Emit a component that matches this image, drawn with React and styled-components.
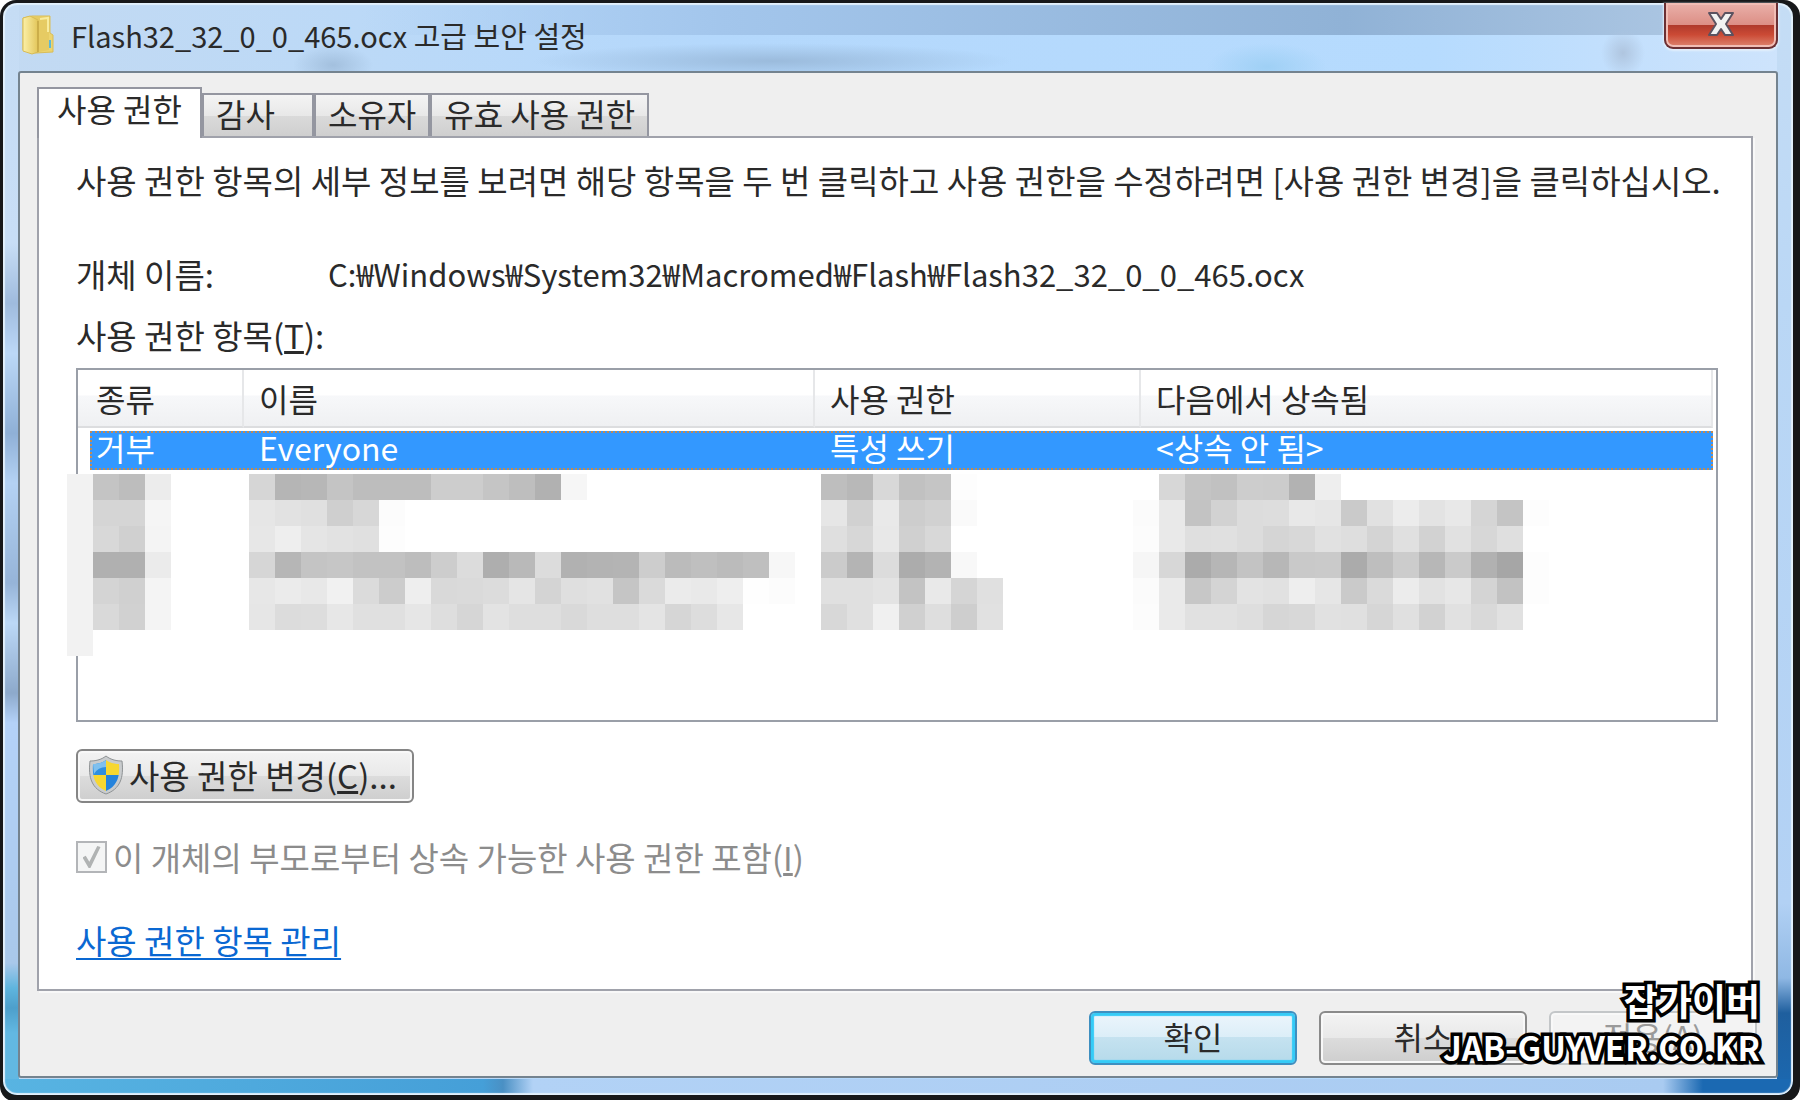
import { useState } from "react";
import styled, { createGlobalStyle, css } from "styled-components";

const GlobalStyle = createGlobalStyle`
  * {
    box-sizing: border-box;
  }
  body {
    margin: 0;
    background: #fff;
    color: #2a2a2a;
    font-family: "Noto Sans CJK KR", "Noto Sans", sans-serif;
    font-size: 32px;
    font-weight: 400;
    line-height: 38px;
  }
  button, input {
    font: inherit;
    color: inherit;
  }
`;

const Frame = styled.div`
  position: relative;
  display: flex;
  min-height: 100vh;
  padding: 3px 7px 7px 3px;
  border-radius: 16px;
  background: #17181a;
`;

const Glass = styled.main`
  flex: 1;
  min-width: 0;
  display: flex;
  flex-direction: column;
  padding: 0 15px 17px;
  border-radius: 14px;
  box-shadow: inset 0 0 1px 2px #e2f0fc;
  background:
    linear-gradient(90deg, #58b4e2, #459fd8 480px, #4a90c4 500px, #b2d2f6 530px, #a9cbf1 calc(100% - 130px), #1b69b2 calc(100% - 90px)) bottom / 100% 16px no-repeat,
    linear-gradient(#c5dcf4, #c8def6 240px, #9fbbdd 300px, #bcd8f7 350px, #8fb0d6 430px, #b4d2f3 480px, #96b4d8 580px, #bcd8f6 620px, #8da9cb 690px, #b4d2f8 720px, #a9c8ea 960px, #5fb5de 985px, #4d9fcb 1005px, #62b8e2 1030px) left / 16px 100% no-repeat,
    linear-gradient(#c5ddf5, #bad7f5 300px, #b2d1f4 900px, #8fb8e4 975px, #1f5f9e 1010px, #1b69b2) right / 16px 100% no-repeat,
    radial-gradient(ellipse 40px 20px at 330px 62px, #a3c0de, transparent),
    radial-gradient(ellipse 240px 18px at 770px 58px, #9bbbdc, transparent),
    radial-gradient(ellipse 22px 24px at 1620px 50px, #afc5df, transparent),
    radial-gradient(ellipse 60px 24px at 1264px 64px, #9fd0f5, transparent),
    linear-gradient(90deg, transparent 20%, #a3c6ec 40%, #90b2d6 75%, #b4cce6) top / 100% 32px no-repeat,
    linear-gradient(90deg, #c3daf2, #b4d8fc 40%, #b6dbfe 80%, #cfe4fc);
`;

const TitleBar = styled.header`
  display: flex;
  align-items: flex-start;
  height: 68px;
`;

const Title = styled.h1`
  flex: 1;
  display: flex;
  align-items: center;
  gap: 17px;
  height: 64px;
  margin: 0;
  padding-left: 4px;
  font-size: 29px;
  font-weight: 400;
  white-space: nowrap;
`;

const CloseButton = styled.button`
  display: grid;
  place-items: center;
  width: 114px;
  height: 46px;
  padding: 0 0 2px;
  border: 2px solid #6b2f33;
  border-top: 0;
  border-radius: 0 0 9px 9px;
  box-shadow: inset 0 0 0 2px #f1bdb5, 0 1px 2px 1px #e3effb;
  background: linear-gradient(#eab1aa, #dc8e85 50%, #b03a2c 51%, #cb4a35 72%, #de8570);
`;

const Client = styled.section`
  flex: 1;
  display: flex;
  flex-direction: column;
  padding: 14px 19px 11px 17px;
  border: 2px solid #74838f;
  border-radius: 3px;
  background: #efefef;
`;

const TabList = styled.div`
  display: flex;
  align-items: flex-end;
`;

const Tab = styled.button`
  height: 43px;
  min-width: 112px;
  padding: 0 12px 5px;
  border: 2px solid #9496a0;
  border-bottom: 0;
  background: linear-gradient(#f4f4f4, #e8e8e8 50%, #dadada 51%, #cfcfcf);
  text-align: left;
  line-height: 36px;
  white-space: nowrap;
  ${(props) =>
    props.$active &&
    css`
      position: relative;
      height: 51px;
      margin-bottom: -2px;
      padding: 0 18px 12px;
      background: #fff;
    `}
`;

const Panel = styled.div`
  flex: 1;
  display: flex;
  flex-direction: column;
  align-items: flex-start;
  margin-right: 4px;
  padding: 23px 33px 30px 37px;
  border: 2px solid #a0a2ab;
  background: #fff;
  box-shadow: 2px 2px 0 #f8f8f8;
  font-size: 33px;
`;

const Hint = styled.p`
  margin: 0 -24px 56px 0;
`;

const ObjectName = styled.dl`
  display: grid;
  grid-template-columns: 252px 1fr;
  margin: 0 0 23px;
  dd {
    margin: 0;
    font-size: 31px;
  }
`;

const ListLabel = styled.div`
  margin-bottom: 14px;
`;

const ListBox = styled.div`
  position: relative;
  align-self: stretch;
  height: 354px;
  margin-bottom: 27px;
  padding-right: 3px;
  border: 2px solid #9a9fa8;
  font-size: 32px;
`;

const Table = styled.table`
  width: 100%;
  table-layout: fixed;
  border-spacing: 0;
  text-align: left;
`;

const HeadCell = styled.th`
  height: 58px;
  padding: 0 0 0 ${(props) => (props.$first ? 18 : 15)}px;
  border-right: 2px solid #e6e7e9;
  border-bottom: 2px solid #dcdddf;
  background: linear-gradient(#fff 45%, #f7f8fa 46%, #eff0f2);
  font-weight: 400;
`;

const SelectedRow = styled.tr`
  position: relative;
  color: #fff;
  /* focus ring runs round the whole row */
  td:first-child::after {
    content: "";
    position: absolute;
    inset: 3px 0 0 12px;
    border: 2px dotted #c08a55;
  }
`;

const Cell = styled.td`
  height: 42px;
  padding: 0 0 4px ${(props) => (props.$first ? 18 : 15)}px;
  line-height: 36px;
  background: linear-gradient(#3398ff, #3398ff) ${(props) => (props.$first ? 12 : 0)}px 3px no-repeat;
`;

const Mosaic = styled.svg`
  position: absolute;
  top: 104px;
  left: -11px;
`;

const ShieldButton = styled.button`
  display: flex;
  align-items: center;
  gap: 5px;
  height: 54px;
  margin-bottom: 35px;
  padding: 0 15px 2px 10px;
  border: 2px solid #858585;
  border-radius: 6px;
  box-shadow: inset 0 0 0 2px #f8f8f8;
  background: linear-gradient(#f3f3f3, #e9e9e9 50%, #dcdcdc 51%, #cecece);
`;

const CheckRow = styled.label`
  display: flex;
  align-items: center;
  gap: 6px;
  margin-bottom: 45px;
  color: #8c8c8c;
`;

const CheckBox = styled.input`
  appearance: none;
  width: 31px;
  height: 32px;
  margin: 0;
  border: 2px solid #b3b5b8;
  background: #f4f5f5;
  display: grid;
  place-items: center;
  &:checked::before {
    content: "";
    width: 18px;
    height: 22px;
    background: #b0b3b3;
    clip-path: polygon(0 52%, 18% 44%, 38% 72%, 82% 0, 100% 4%, 44% 100%, 34% 100%);
  }
`;

const ManageLink = styled.a`
  color: #0a68d2;
  text-underline-offset: 4px;
  text-decoration-thickness: 2px;
`;

const Footer = styled.footer`
  display: flex;
  justify-content: flex-end;
  gap: 22px;
  padding-top: 20px;
`;

const DialogButton = styled.button`
  width: 208px;
  height: 54px;
  padding: 0 0 5px;
  border: 2px solid #8a8a8a;
  border-radius: 6px;
  box-shadow: inset 0 0 0 2px #f8f8f8;
  background: linear-gradient(#f3f3f3, #e9e9e9 50%, #dcdcdc 51%, #cecece);
  ${(props) =>
    props.$primary &&
    css`
      border-color: #3e8fc0;
      box-shadow: inset 0 0 1px 3px #35cbf7;
      background: linear-gradient(#ecf5fc, #dceef8 48%, #c5e2f0 49%, #b5daea);
    `}
  &:disabled {
    border-color: #c3c6c8;
    background: #f3f3f3;
    color: #9a9a9a;
  }
`;

const Watermark = styled.div`
  position: absolute;
  right: 40px;
  bottom: 31px;
  color: #fff;
  font-size: 33px;
  font-weight: 700;
  line-height: 47px;
  text-align: right;
  -webkit-text-stroke: 7px #000;
  paint-order: stroke fill;
  pointer-events: none;
`;

const SiteName = styled.div`
  font-size: 37px;
`;

const tabs = ["사용 권한", "감사", "소유자", "유효 사용 권한"];

const columns = [
  { title: "종류", width: 166, value: "거부" },
  { title: "이름", width: 571, value: "Everyone" },
  { title: "사용 권한", width: 326, value: "특성 쓰기" },
  { title: "다음에서 상속됨", value: "<상속 안 됨>" },
];

// grey levels of the blurred-out rows, one hex pair per tile
const TILE = 26;
const blocks = [
  { col: 0, rows: ["f2", "f2", "f2", "f2", "f2", "f2", "f2"] },
  { col: 1, rows: ["c4 bd ec", "d5 d5 f5", "d8 d0 f4", "b0 b0 eb", "d4 d0 f4", "d9 d1 f4"] },
  {
    col: 7,
    rows: [
      "d6 b5 b7 c4 bd bd bd cd cd c5 be b1 f6",
      "e6 e2 e0 cf d7 fc",
      "e7 ee e5 e2 e0 fd",
      "d6 b6 c4 c6 c2 c2 bd cd dc ae b9 dc b1 b3 b4 cd bb bf bb bf f7",
      "e7 eb e8 f1 db cc ee d9 da dc e5 d4 df e1 c5 da eb e9 ee fe fc",
      "e6 dc dd e7 e0 e0 e6 de d6 e3 de de d9 de de e4 d6 dd e7",
    ],
  },
  {
    col: 29,
    rows: [
      "be b8 d8 c1 c5 fd",
      "e6 d1 e9 cd d1 fa",
      "df d7 e8 d0 d8",
      "cb b4 dc ac b3 f8",
      "e0 e0 e3 c3 e9 d5 e0",
      "d8 e0 f0 d0 de ce e1",
    ],
  },
  {
    col: 41,
    rows: [
      "ff d7 c4 c1 cd cc b2 ee",
      "fb e9 c3 d2 dc dd e8 e6 ca e1 ec e3 e8 d5 c4 fd",
      "fc e9 df e0 dc d5 d8 e1 de d4 e0 d2 e1 d7 df",
      "f6 d7 ab b6 c3 b7 c9 ca ab be cc b7 ca b1 a6 fd",
      "fb ea c7 d4 e3 e1 ee e6 ca da ec e2 e7 d4 c2 fd",
      "fc ea e1 e1 de d6 d8 e1 e0 d6 e0 d2 e1 d9 e1",
    ],
  },
];

function HiddenRows() {
  return (
    <Mosaic width={TILE * 57} height={TILE * 7} shapeRendering="crispEdges" aria-hidden="true">
      {blocks.map((block) =>
        block.rows.map((row, y) =>
          row.split(" ").map((level, x) => (
            <rect
              key={block.col + "-" + y + "-" + x}
              x={(block.col + x) * TILE}
              y={y * TILE}
              width={TILE}
              height={TILE}
              fill={"#" + level + level + level}
            />
          ))
        )
      )}
    </Mosaic>
  );
}

function FolderIcon() {
  return (
    <svg width="32" height="40" viewBox="0 0 32 40" aria-hidden="true">
      <defs>
        <linearGradient id="folder" x1="0" x2="1">
          <stop offset="0" stopColor="#fbf0a8" />
          <stop offset="1" stopColor="#e3c65a" />
        </linearGradient>
      </defs>
      <path d="M1 3 L10 1 L28 1 L28 18 L31 20 L31 37 L14 38 L1 35 Z" fill="#ecd46f" stroke="#d9bd58" />
      <path d="M10 2 L27 2 L27 35 L17 37 Z" fill="#e6cb63" />
      <path d="M1 3 L8 1 L16 5 L16 37 L10 39 L1 36 Z" fill="url(#folder)" stroke="#d8bc55" />
      <path d="M16 6 L16 37" stroke="#b99a3a" />
      <path d="M28 25 L28 33" stroke="#5cb8d8" strokeWidth="2" />
      <path d="M18 4 L26 3 L26 17" fill="none" stroke="#f8ec9e" strokeWidth="2" />
    </svg>
  );
}

function CloseIcon() {
  return (
    <svg width="28" height="26" viewBox="0 0 28 26" aria-hidden="true">
      <path
        d="M2 2 H10 L14 8 L18 2 H26 L19 13 L26 24 H18 L14 18 L10 24 H2 L9 13 Z"
        fill="#f2f2f2"
        stroke="#5b5260"
        strokeWidth="2"
        strokeLinejoin="round"
      />
    </svg>
  );
}

function ShieldIcon() {
  return (
    <svg width="36" height="40" viewBox="0 0 36 40" aria-hidden="true">
      <defs>
        <clipPath id="shield">
          <path d="M18 5 C22 8 27 9 31 9 C32 22 29 31 18 36 C7 31 4 22 5 9 C9 9 14 8 18 5 Z" />
        </clipPath>
      </defs>
      <path
        d="M18 1 C23 5 29 6 34 6 C36 23 32 34 18 39 C4 34 0 23 2 6 C7 6 13 5 18 1 Z"
        fill="#c9ccce"
        stroke="#8e9294"
      />
      <g clipPath="url(#shield)">
        <rect width="18" height="20" fill="#2f8fe0" />
        <rect x="18" width="18" height="20" fill="#f7d731" />
        <rect y="20" width="18" height="20" fill="#f7d731" />
        <rect x="18" y="20" width="18" height="20" fill="#2583dc" />
        <path d="M5 9 L18 5 V12 Q10 12 6 19 Z" fill="#7fc0ee" />
      </g>
    </svg>
  );
}

export default function App() {
  const [active, setActive] = useState(0);

  return (
    <>
      <GlobalStyle />
      <Frame>
        <Glass>
          <TitleBar>
            <Title>
              <FolderIcon />
              Flash32_32_0_0_465.ocx 고급 보안 설정
            </Title>
            <CloseButton aria-label="닫기">
              <CloseIcon />
            </CloseButton>
          </TitleBar>
          <Client>
            <TabList role="tablist">
              {tabs.map((tab, i) => (
                <Tab
                  key={tab}
                  role="tab"
                  aria-selected={i === active}
                  $active={i === active}
                  onClick={() => setActive(i)}
                >
                  {tab}
                </Tab>
              ))}
            </TabList>
            <Panel role="tabpanel">
              <Hint>
                사용 권한 항목의 세부 정보를 보려면 해당 항목을 두 번 클릭하고 사용 권한을 수정하려면 [사용 권한
                변경]을 클릭하십시오.
              </Hint>
              <ObjectName>
                <dt>개체 이름:</dt>
                <dd>C:₩Windows₩System32₩Macromed₩Flash₩Flash32_32_0_0_465.ocx</dd>
              </ObjectName>
              <ListLabel id="entries">
                사용 권한 항목(<u>T</u>):
              </ListLabel>
              <ListBox>
                <Table aria-labelledby="entries">
                  <colgroup>
                    {columns.map((column) => (
                      <col key={column.title} width={column.width} />
                    ))}
                  </colgroup>
                  <thead>
                    <tr>
                      {columns.map((column, i) => (
                        <HeadCell key={column.title} $first={i === 0}>
                          {column.title}
                        </HeadCell>
                      ))}
                    </tr>
                  </thead>
                  <tbody>
                    <SelectedRow>
                      {columns.map((column, i) => (
                        <Cell key={column.title} $first={i === 0}>
                          {column.value}
                        </Cell>
                      ))}
                    </SelectedRow>
                  </tbody>
                </Table>
                <HiddenRows />
              </ListBox>
              <ShieldButton>
                <ShieldIcon />
                <span>
                  사용 권한 변경(<u>C</u>)...
                </span>
              </ShieldButton>
              <CheckRow>
                <CheckBox type="checkbox" defaultChecked disabled />
                <span>
                  이 개체의 부모로부터 상속 가능한 사용 권한 포함(<u>I</u>)
                </span>
              </CheckRow>
              <ManageLink href="#manage">사용 권한 항목 관리</ManageLink>
            </Panel>
            <Footer>
              <DialogButton $primary>확인</DialogButton>
              <DialogButton>취소</DialogButton>
              <DialogButton disabled>
                적용(<u>A</u>)
              </DialogButton>
            </Footer>
          </Client>
        </Glass>
        <Watermark>
          <SiteName>잡가이버</SiteName>
          JAB-GUYVER.CO.KR
        </Watermark>
      </Frame>
    </>
  );
}
